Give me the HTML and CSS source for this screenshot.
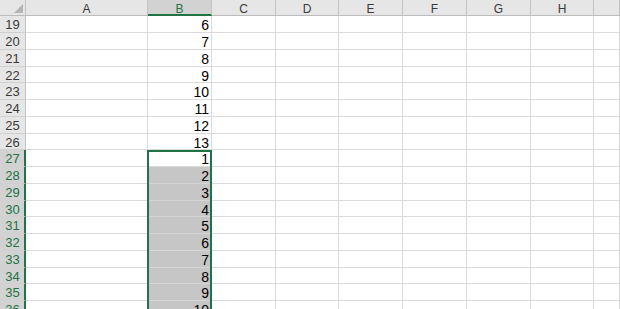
FILE: index.html
```html
<!DOCTYPE html>
<html>
<head>
<meta charset="utf-8">
<link rel="stylesheet" href="styles.css">
</head>
<body>
<div class="sheet">
  <div class="grid">
    <div class="ch corner"><svg width="25" height="15" viewBox="0 0 25 15"><polygon points="23,4 23,13 14,13" fill="#b4b4b4"/></svg></div>
    <div class="ch">A</div><div class="ch selcol">B</div><div class="ch">C</div><div class="ch">D</div><div class="ch">E</div><div class="ch">F</div><div class="ch">G</div><div class="ch">H</div><div class="ch"></div>

    <div class="rh">19</div><div class="c"></div><div class="c">6</div><div class="c"></div><div class="c"></div><div class="c"></div><div class="c"></div><div class="c"></div><div class="c"></div><div class="c"></div>
    <div class="rh">20</div><div class="c"></div><div class="c">7</div><div class="c"></div><div class="c"></div><div class="c"></div><div class="c"></div><div class="c"></div><div class="c"></div><div class="c"></div>
    <div class="rh">21</div><div class="c"></div><div class="c">8</div><div class="c"></div><div class="c"></div><div class="c"></div><div class="c"></div><div class="c"></div><div class="c"></div><div class="c"></div>
    <div class="rh">22</div><div class="c"></div><div class="c">9</div><div class="c"></div><div class="c"></div><div class="c"></div><div class="c"></div><div class="c"></div><div class="c"></div><div class="c"></div>
    <div class="rh">23</div><div class="c"></div><div class="c">10</div><div class="c"></div><div class="c"></div><div class="c"></div><div class="c"></div><div class="c"></div><div class="c"></div><div class="c"></div>
    <div class="rh">24</div><div class="c"></div><div class="c">11</div><div class="c"></div><div class="c"></div><div class="c"></div><div class="c"></div><div class="c"></div><div class="c"></div><div class="c"></div>
    <div class="rh">25</div><div class="c"></div><div class="c">12</div><div class="c"></div><div class="c"></div><div class="c"></div><div class="c"></div><div class="c"></div><div class="c"></div><div class="c"></div>
    <div class="rh">26</div><div class="c"></div><div class="c">13</div><div class="c"></div><div class="c"></div><div class="c"></div><div class="c"></div><div class="c"></div><div class="c"></div><div class="c"></div>
    <div class="rh selrow">27</div><div class="c"></div><div class="c">1</div><div class="c"></div><div class="c"></div><div class="c"></div><div class="c"></div><div class="c"></div><div class="c"></div><div class="c"></div>
    <div class="rh selrow">28</div><div class="c"></div><div class="c shade">2</div><div class="c"></div><div class="c"></div><div class="c"></div><div class="c"></div><div class="c"></div><div class="c"></div><div class="c"></div>
    <div class="rh selrow">29</div><div class="c"></div><div class="c shade">3</div><div class="c"></div><div class="c"></div><div class="c"></div><div class="c"></div><div class="c"></div><div class="c"></div><div class="c"></div>
    <div class="rh selrow">30</div><div class="c"></div><div class="c shade">4</div><div class="c"></div><div class="c"></div><div class="c"></div><div class="c"></div><div class="c"></div><div class="c"></div><div class="c"></div>
    <div class="rh selrow">31</div><div class="c"></div><div class="c shade">5</div><div class="c"></div><div class="c"></div><div class="c"></div><div class="c"></div><div class="c"></div><div class="c"></div><div class="c"></div>
    <div class="rh selrow">32</div><div class="c"></div><div class="c shade">6</div><div class="c"></div><div class="c"></div><div class="c"></div><div class="c"></div><div class="c"></div><div class="c"></div><div class="c"></div>
    <div class="rh selrow">33</div><div class="c"></div><div class="c shade">7</div><div class="c"></div><div class="c"></div><div class="c"></div><div class="c"></div><div class="c"></div><div class="c"></div><div class="c"></div>
    <div class="rh selrow">34</div><div class="c"></div><div class="c shade">8</div><div class="c"></div><div class="c"></div><div class="c"></div><div class="c"></div><div class="c"></div><div class="c"></div><div class="c"></div>
    <div class="rh selrow">35</div><div class="c"></div><div class="c shade">9</div><div class="c"></div><div class="c"></div><div class="c"></div><div class="c"></div><div class="c"></div><div class="c"></div><div class="c"></div>
    <div class="rh selrow">36</div><div class="c"></div><div class="c shade">10</div><div class="c"></div><div class="c"></div><div class="c"></div><div class="c"></div><div class="c"></div><div class="c"></div><div class="c"></div>
  </div>
  <div class="selection"></div>
</div>
</body>
</html>
```

FILE: styles.css
```css
html, body {
  margin: 0;
  padding: 0;
  background: #ffffff;
  overflow: hidden;
}

.sheet {
  position: relative;
  width: 620px;
  height: 309px;
  overflow: hidden;
}

.grid {
  display: grid;
  grid-template-columns: 26px 122px 64px 64px 63px 64px 64px 64px 63px 1fr;
  grid-template-rows: 16px repeat(4, 17px 17px 17px 16px) 17px 17px;
}

.grid > div {
  box-sizing: border-box;
  overflow: hidden;
  white-space: nowrap;
}

.ch {
  background: #e6e6e6;
  border-right: 1px solid #c3c3c3;
  border-bottom: 1px solid #bcbcbc;
  font-family: "Liberation Sans", Arial, sans-serif;
  font-size: 12px;
  line-height: 12px;
  padding-top: 3px;
  text-align: center;
  color: #3a3a3a;
}

.corner {
  padding-top: 0 !important;
}

.corner svg {
  display: block;
}

.selcol {
  background: #d2d2d2;
  color: #217346;
  border-bottom: 2px solid #217346;
}

.rh {
  background: #e6e6e6;
  border-right: 1px solid #c3c3c3;
  border-bottom: 1px solid #d0d0d0;
  font-family: "Liberation Sans", Arial, sans-serif;
  font-size: 13px;
  line-height: 15px;
  padding-top: 1px;
  text-align: center;
  color: #3a3a3a;
}

.selrow {
  background: #d2d2d2;
  color: #217346;
  border-right: 2px solid #217346;
  padding-left: 1px;
}

.c {
  border-right: 1px solid #dadada;
  border-bottom: 1px solid #dadada;
  font-family: "Liberation Sans", Arial, sans-serif;
  font-size: 14px;
  line-height: 15px;
  padding-top: 2px;
  padding-right: 2px;
  text-align: right;
  color: #000000;
}

.shade {
  background: #c6c6c6;
  border-bottom-color: #d6d6d6;
}

.selection {
  position: absolute;
  left: 147px;
  top: 150px;
  width: 65px;
  height: 200px;
  box-sizing: border-box;
  border: 2px solid #217346;
  pointer-events: none;
}
```
